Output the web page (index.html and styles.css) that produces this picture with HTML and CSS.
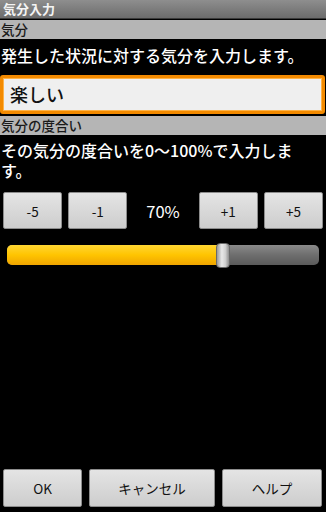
FILE: index.html
```html
<!DOCTYPE html>
<html lang="ja">
<head>
<meta charset="utf-8">
<link rel="stylesheet" href="styles.css">
</head>
<body>
<div class="screen">
  <div class="titlebar">気分入力</div>
  <div class="section">気分</div>
  <div class="prompt">発生した状況に対する気分を入力します。</div>
  <div class="input">楽しい</div>
  <div class="section sec2">気分の度合い</div>
  <div class="prompt prompt2">その気分の度合いを0〜100%で入力します。</div>
  <div class="steps">
    <div class="cell"><button class="btn">-5</button></div>
    <div class="cell"><button class="btn">-1</button></div>
    <div class="cell value">70%</div>
    <div class="cell"><button class="btn">+1</button></div>
    <div class="cell"><button class="btn">+5</button></div>
  </div>
  <div class="slider">
    <div class="track">
      <div class="fill" style="width:67.5%"></div>
      <div class="thumb" style="left:67%"></div>
    </div>
  </div>
  <div class="footer">
    <button class="btn fbtn ok">OK</button>
    <button class="btn fbtn cancel">キャンセル</button>
    <button class="btn fbtn help">ヘルプ</button>
  </div>
</div>
</body>
</html>
```
FILE: styles.css
```css
html, body {
  margin: 0;
  padding: 0;
  background: #000;
}
body {
  font-family: "Noto Sans CJK JP", "Noto Sans", "DejaVu Sans", sans-serif;
  color: #fff;
}
.screen {
  width: 326px;
  height: 512px;
  display: flex;
  flex-direction: column;
}
.titlebar {
  height: 18px;
  line-height: 17px;
  background: linear-gradient(#8e8e8e, #6c6c6c);
  font-size: 13px;
  font-weight: bold;
  padding-left: 3px;
  border-bottom: 1px solid #3a3a3a;
  color: #f4f4f4;
}
.section {
  height: 19px;
  line-height: 19px;
  background: #b5b5b5;
  color: #1a1a1a;
  font-size: 13.5px;
  font-weight: 500;
  padding-left: 1px;
  margin-top: 1px;
}
.prompt {
  font-size: 16px;
  font-weight: 500;
  line-height: 20px;
  padding: 6px 0 0 1px;
  height: 30px;
}
.input {
  margin: 0 1px 0 0;
  height: 33px;
  border: 3px solid #f38a00;
  border-radius: 3px;
  background: #efefef;
  color: #111;
  font-size: 18px;
  font-weight: 500;
  line-height: 33px;
  padding-left: 7px;
  box-shadow: inset 0 0 0 1px #ffb347;
}
.sec2 {
  margin-top: 2px;
}
.prompt2 {
  height: auto;
  padding-top: 5px;
  max-width: 300px;
}
.steps {
  display: grid;
  grid-template-columns: repeat(5, 1fr);
  margin-top: 12px;
  height: 37px;
}
.cell {
  display: flex;
  justify-content: center;
  align-items: stretch;
  padding: 0 3px;
}
.value {
  align-items: center;
  font-size: 16.5px;
  font-weight: normal;
  color: #fff;
}
.btn {
  font-family: "Noto Sans CJK JP", "Noto Sans", sans-serif;
  width: 100%;
  background: linear-gradient(#e4e4e4, #cdcdcd);
  border: 1px solid #8c8c8c;
  border-radius: 2px;
  color: #111;
  font-size: 13.5px;
  padding: 0;
  margin: 0;
}
.slider {
  margin-top: 16px;
  padding: 0 7px;
}
.track {
  position: relative;
  height: 20px;
  border-radius: 5px;
  background: linear-gradient(#8a8a8a, #6e6e6e 50%, #5a5a5a);
  display: flex;
}
.fill {
  height: 100%;
  border-radius: 5px 0 0 5px;
  background: linear-gradient(#ffd633, #ffc400 50%, #f0a500);
}
.thumb {
  position: absolute;
  top: -2px;
  width: 12px;
  height: 23px;
  border-radius: 4px;
  background: linear-gradient(90deg, #9a9a9a, #e8e8e8 40%, #d0d0d0 70%, #8e8e8e);
  border: 1px solid #6a6a6a;
}
.footer {
  margin-top: auto;
  display: flex;
  gap: 7px;
  padding: 0 4px 5px 3px;
  height: 38px;
}
.fbtn {
  width: auto;
}
.ok { flex: 0 0 79px; }
.cancel { flex: 0 0 126px; }
.help { flex: 1; }
```
